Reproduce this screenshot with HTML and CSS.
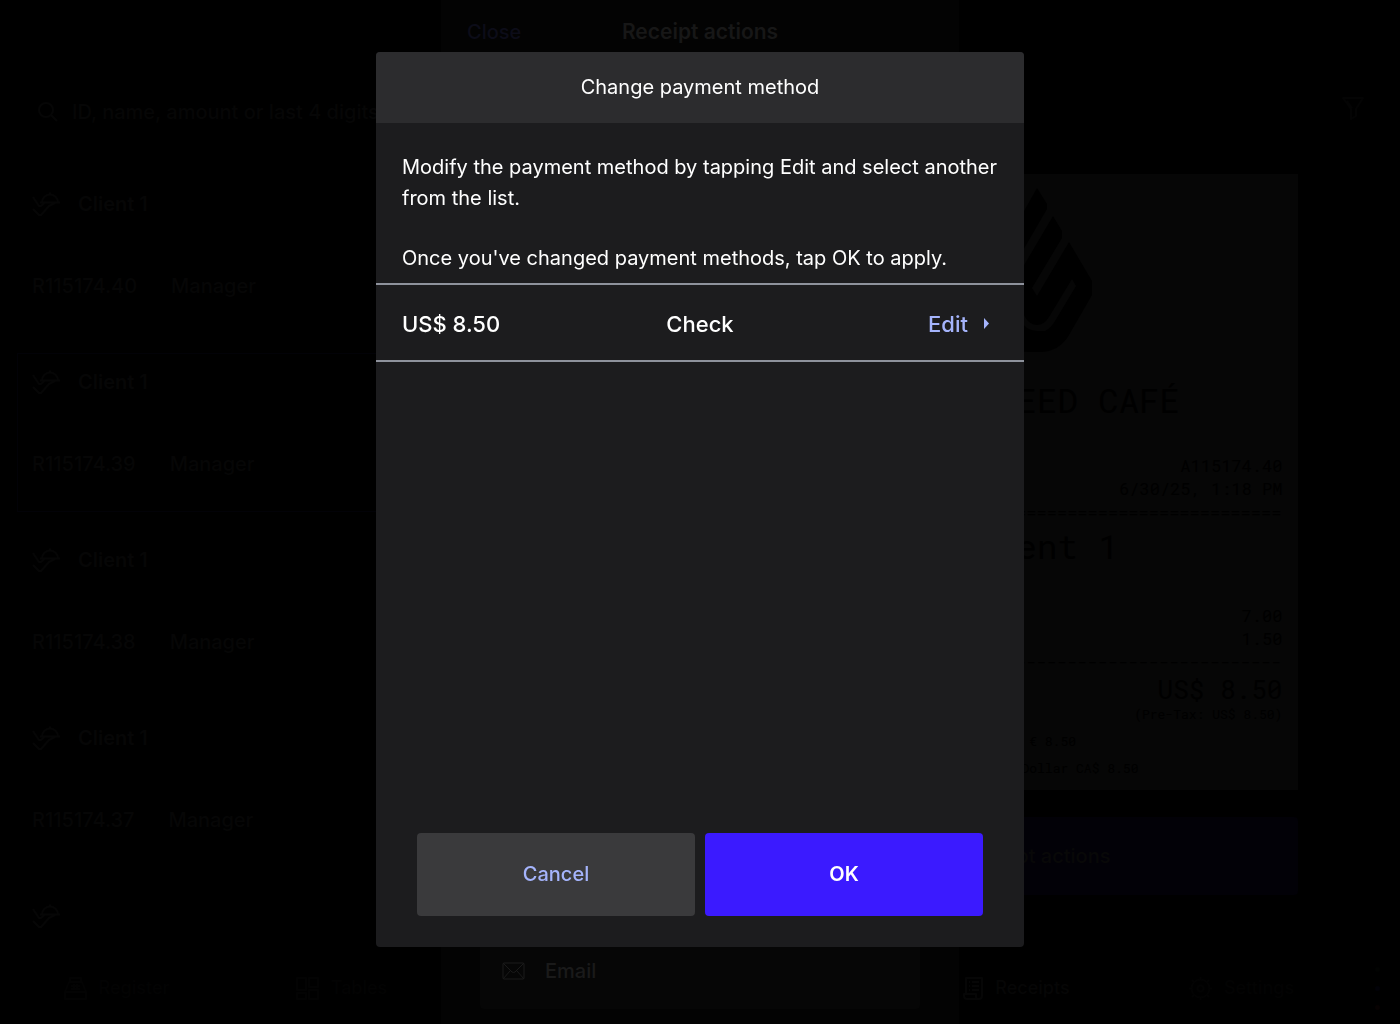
FILE: index.html
```html
<!DOCTYPE html>
<html lang="en">
<head>
<meta charset="utf-8">
<meta name="viewport" content="width=device-width, initial-scale=1">
<title>Change payment method</title>
<link rel="stylesheet" href="styles.css">
</head>
<body>
<svg class="defs" aria-hidden="true">
  <symbol id="tray" viewBox="0 0 28 26"><path d="M10 11.500a8 8 0 0 1 16 0M8 11.500h20M17 2.500h2M1 6l6 9h2l4-3.500M1 18l6 6h2l8-9 6-3"/></symbol>
</svg>

<div class="app">
  <header class="search">
    <svg class="icon" width="20" height="20" viewBox="0 0 20 20"><circle cx="8" cy="8" r="7"/><path d="M13 13l6 6"/></svg>
    <input class="search-input" type="search" aria-label="Search receipts" placeholder="ID, name, amount or last 4 digits">
    <button class="plain filter" type="button" aria-label="Filter">
      <svg class="icon" width="22" height="23" viewBox="0 0 22 23"><path d="M1 1h20l-7 11v7l-5 3V12zM5 4l5 7"/></svg>
    </button>
  </header>

  <main class="columns">
    <ul class="list">
      <li class="card"><div class="client"><svg class="icon" width="28" height="26"><use href="#tray"/></svg>Client 1</div><div class="meta"><span>R115174.40</span><span>Manager</span></div></li>
      <li class="card selected"><div class="client"><svg class="icon" width="28" height="26"><use href="#tray"/></svg>Client 1</div><div class="meta"><span>R115174.39</span><span>Manager</span></div></li>
      <li class="card"><div class="client"><svg class="icon" width="28" height="26"><use href="#tray"/></svg>Client 1</div><div class="meta"><span>R115174.38</span><span>Manager</span></div></li>
      <li class="card"><div class="client"><svg class="icon" width="28" height="26"><use href="#tray"/></svg>Client 1</div><div class="meta"><span>R115174.37</span><span>Manager</span></div></li>
      <li class="card"><div class="client"><svg class="icon" width="28" height="26"><use href="#tray"/></svg></div></li>
    </ul>

    <section class="detail">
      <article class="receipt">
        <svg class="logo" width="110" height="164" viewBox="0 0 110 164" aria-hidden="true">
          <path d="M55 0l10 16v5L25 90l-9-15v-6z"/>
          <path d="M71 28l9 15v7L50 100l5 8 32-54 23 39v14L87 147q-10 17-29 17h-11q-19 0-29-14L0 107V93L23 54l9 15-15 26 20 36q7 12 18 12h8q6-3 10-10l21-35-4-7-23 38q-5 8-12 8t-12-8L28 101z"/>
        </svg>
        <h2 class="receipt-name">LITESPEED CAFÉ</h2>
        <p class="right">A115174.40<br>6/30/25, 1:18 PM</p>
        <p class="rule">================================================</p>
        <p class="receipt-client">Client 1</p>
        <p class="right">7.00<br>1.50</p>
        <p class="rule">------------------------------------------------</p>
        <p class="total">US$ 8.50</p>
        <p class="small right">(Pre-Tax: US$ 8.50)</p>
        <p class="small currency">EUR € 8.50</p>
        <p class="small currency">≈ Canadian Dollar CA$ 8.50</p>
      </article>
      <button class="actions" type="button">Receipt actions</button>
    </section>
  </main>

  <nav class="tabs" aria-label="Main">
    <a class="tab" href="#register"><svg class="icon" width="23" height="23" viewBox="0 0 23 23"><path d="M6 1h11v4H6zM5 5h13l4 10v7H1v-7zM1 15h21M7 9h9M7 12h9M10 7v6M13 7v6"/></svg>Register</a>
    <a class="tab" href="#tables"><svg class="icon" width="23" height="23" viewBox="0 0 23 23"><path d="M1 1h9v12H1zM13 1h9v9h-9zM1 16h9v6H1zM13 13h9v9h-9z"/></svg>Tables</a>
    <a class="tab current" href="#receipts"><svg class="icon" width="20" height="23" viewBox="0 0 20 23"><path d="M3 17V1h16v18q0 3-3 3H4q-3 0-3-3v-2h12v3q0 2 2 2M6 5h1M9 5h7M6 9h1M9 9h7M6 13h1M9 13h7"/></svg>Receipts</a>
    <a class="tab" href="#settings"><svg class="icon" width="23" height="23" viewBox="0 0 23 23"><circle cx="11.500" cy="11.500" r="9"/><circle cx="11.500" cy="11.500" r="3"/><path d="M11.500 0v3M11.500 20v3M0 11.500h3M20 11.500h3M3 3l2 2M18 18l2 2M3 20l2-2M18 5l2-2"/></svg>Settings</a>
    <div class="lights" aria-hidden="true"><i class="light"></i><i class="light blue"></i><i class="light red"></i></div>
  </nav>
</div>

<div class="layer">
  <section class="sheet" aria-label="Receipt actions">
    <header class="sheet-head">
      <button class="plain close" type="button">Close</button>
      <h2 class="sheet-title">Receipt actions</h2>
    </header>
    <button class="option" type="button">
      <svg class="icon" width="23" height="18" viewBox="0 0 23 18"><rect x="1" y="1" width="21" height="16" rx="1"/><path d="M1 1l9 9q1.500 1 3 0l9-9M1 17l7-8M22 17l-7-8"/></svg>
      Email
    </button>
  </section>
</div>

<div class="layer">
  <section class="modal" role="dialog" aria-modal="true" aria-labelledby="title">
    <h1 class="modal-title" id="title">Change payment method</h1>
    <div class="message">
      <p>Modify the payment method by tapping Edit and select another from the list.</p>
      <p>Once you've changed payment methods, tap OK to apply.</p>
    </div>
    <div class="payment">
      <span>US$ 8.50</span>
      <span>Check</span>
      <button class="plain edit" type="button">Edit <svg width="5" height="11" viewBox="0 0 5 11" aria-hidden="true"><path d="M0 0l5 5.500-5 5.500z"/></svg></button>
    </div>
    <footer class="buttons">
      <button class="button" type="button">Cancel</button>
      <button class="button primary" type="button">OK</button>
    </footer>
  </section>
</div>
</body>
</html>
```
FILE: styles.css
```css
* { box-sizing: border-box; }
html, body { height: 100%; }
body {
  margin: 0;
  overflow: hidden;
  background: #000;
  color: #060606;
  font: 500 20px/28px Inter, "Liberation Sans", sans-serif;
}
h1, h2, p, ul { margin: 0; padding: 0; font-size: inherit; font-weight: 500; }
button, input { font: inherit; color: inherit; border: 0; padding: 0; margin: 0; }
.plain { background: none; }
.defs { position: absolute; width: 0; height: 0; }
.icon { flex: none; fill: none; stroke: currentColor; stroke-width: 2; stroke-linejoin: round; }

/* Screen behind the dialogs */
.app { display: flex; flex-direction: column; height: 100vh; }
.search { display: flex; align-items: center; gap: 14px; padding: 97px 36px 47px 38px; }
.search-input { flex: 1; height: 28px; background: none; outline: 0; }
.search-input::placeholder { color: #060606; opacity: 1; }
.filter { color: #040404; }
.columns { flex: 1; min-height: 0; overflow: hidden; display: grid; grid-template-columns: 13fr 14fr; }
.list { list-style: none; display: grid; gap: 19px; align-content: start; padding: 1px 17px; }
.card { height: 159px; padding: 14px; border: 1px solid transparent; }
.card.selected { border-color: #020207; }
.client { display: flex; align-items: center; gap: 18px; height: 28px; font-weight: 600; }
.meta { display: flex; gap: 34px; margin-top: 54px; }

.detail { padding: 0 14%; }
.receipt {
  padding: 14px 16px 13px;
  background: #060606;
  color: #000;
  font: 17px/23px "Roboto Mono", "Liberation Mono", monospace;
}
.logo { display: block; margin: 0 auto 28px; }
.receipt-name, .receipt-client { font-size: 34px; line-height: 40px; font-weight: 400; text-align: center; white-space: nowrap; }
.receipt p { font-weight: 400; }
.receipt-name { margin-bottom: 34px; }
.receipt .receipt-client { margin: 3px 0 38px; }
.right { text-align: right; }
.rule { overflow: hidden; white-space: nowrap; }
.total { font-size: 26px; line-height: 32px; text-align: right; }
.small { font-size: 13px; line-height: 18px; }
.currency { margin-top: 9px; text-align: center; white-space: nowrap; }
.actions { display: block; width: 100%; height: 78px; margin-top: 27px; border-radius: 4px; background: #020107; color: #080808; }

.tabs { display: grid; grid-template-columns: repeat(6, 1fr) 46px; align-items: center; height: 72px; padding-left: 4px; color: #030303; }
.tab { display: flex; align-items: center; justify-content: center; gap: 12px; font-size: 18px; color: inherit; text-decoration: none; }
.tab.current { grid-column: 5; color: #060606; }
.lights { display: grid; gap: 14px; justify-content: center; }
.light { width: 5px; height: 5px; border-radius: 50%; background: #020302; }
.light.blue { background: #020208; }
.light.red { background: #070202; }

/* Sheet and dialog */
.layer { position: fixed; inset: 0; display: flex; justify-content: center; }
.sheet { display: flex; flex-direction: column; justify-content: space-between; width: 37%; background: #030303; }
.sheet-head { display: grid; grid-template-columns: 1fr auto 1fr; padding: 18px 26px; }
.close { justify-self: start; color: #0c0c18; }
.sheet-title { color: #171717; font-size: 21px; font-weight: 600; }
.option { display: flex; align-items: center; gap: 20px; height: 77px; margin: 0 39px 15px; padding: 0 22px; border-radius: 4px; background: #060606; color: #1a1a1a; }
.option .icon { stroke-width: 1; }

.modal {
  display: flex;
  flex-direction: column;
  width: 648px;
  max-width: 100%;
  margin: 52px 0 77px;
  overflow: hidden;
  border-radius: 4px;
  background: #1c1c1e;
  color: #fff;
}
.modal-title { padding: 20px; line-height: 31px; text-align: center; background: #2c2c2e; }
.modal-title, .message p { font-weight: 400; }
.message { display: grid; gap: 29px; padding: 29px 20px 9px 26px; line-height: 31px; }
.payment {
  display: grid;
  grid-template-columns: 1fr auto 1fr;
  align-items: center;
  height: 79px;
  padding: 2px 26px 0;
  border: solid #8e929c;
  border-width: 2px 0;
  font-size: 22px;
}
.edit { display: flex; align-items: center; gap: 16px; justify-self: end; margin-right: 9px; color: #a5b4fc; }
.edit svg { fill: currentColor; }
.buttons { display: grid; grid-template-columns: 1fr 1fr; gap: 10px; margin-top: auto; padding: 0 41px 31px; }
.button { height: 83px; padding-bottom: 2px; border-radius: 4px; background: #3a3a3c; color: #a5b4fc; }
.button.primary { background: #3b1aff; color: #fff; font-weight: 600; }
```
